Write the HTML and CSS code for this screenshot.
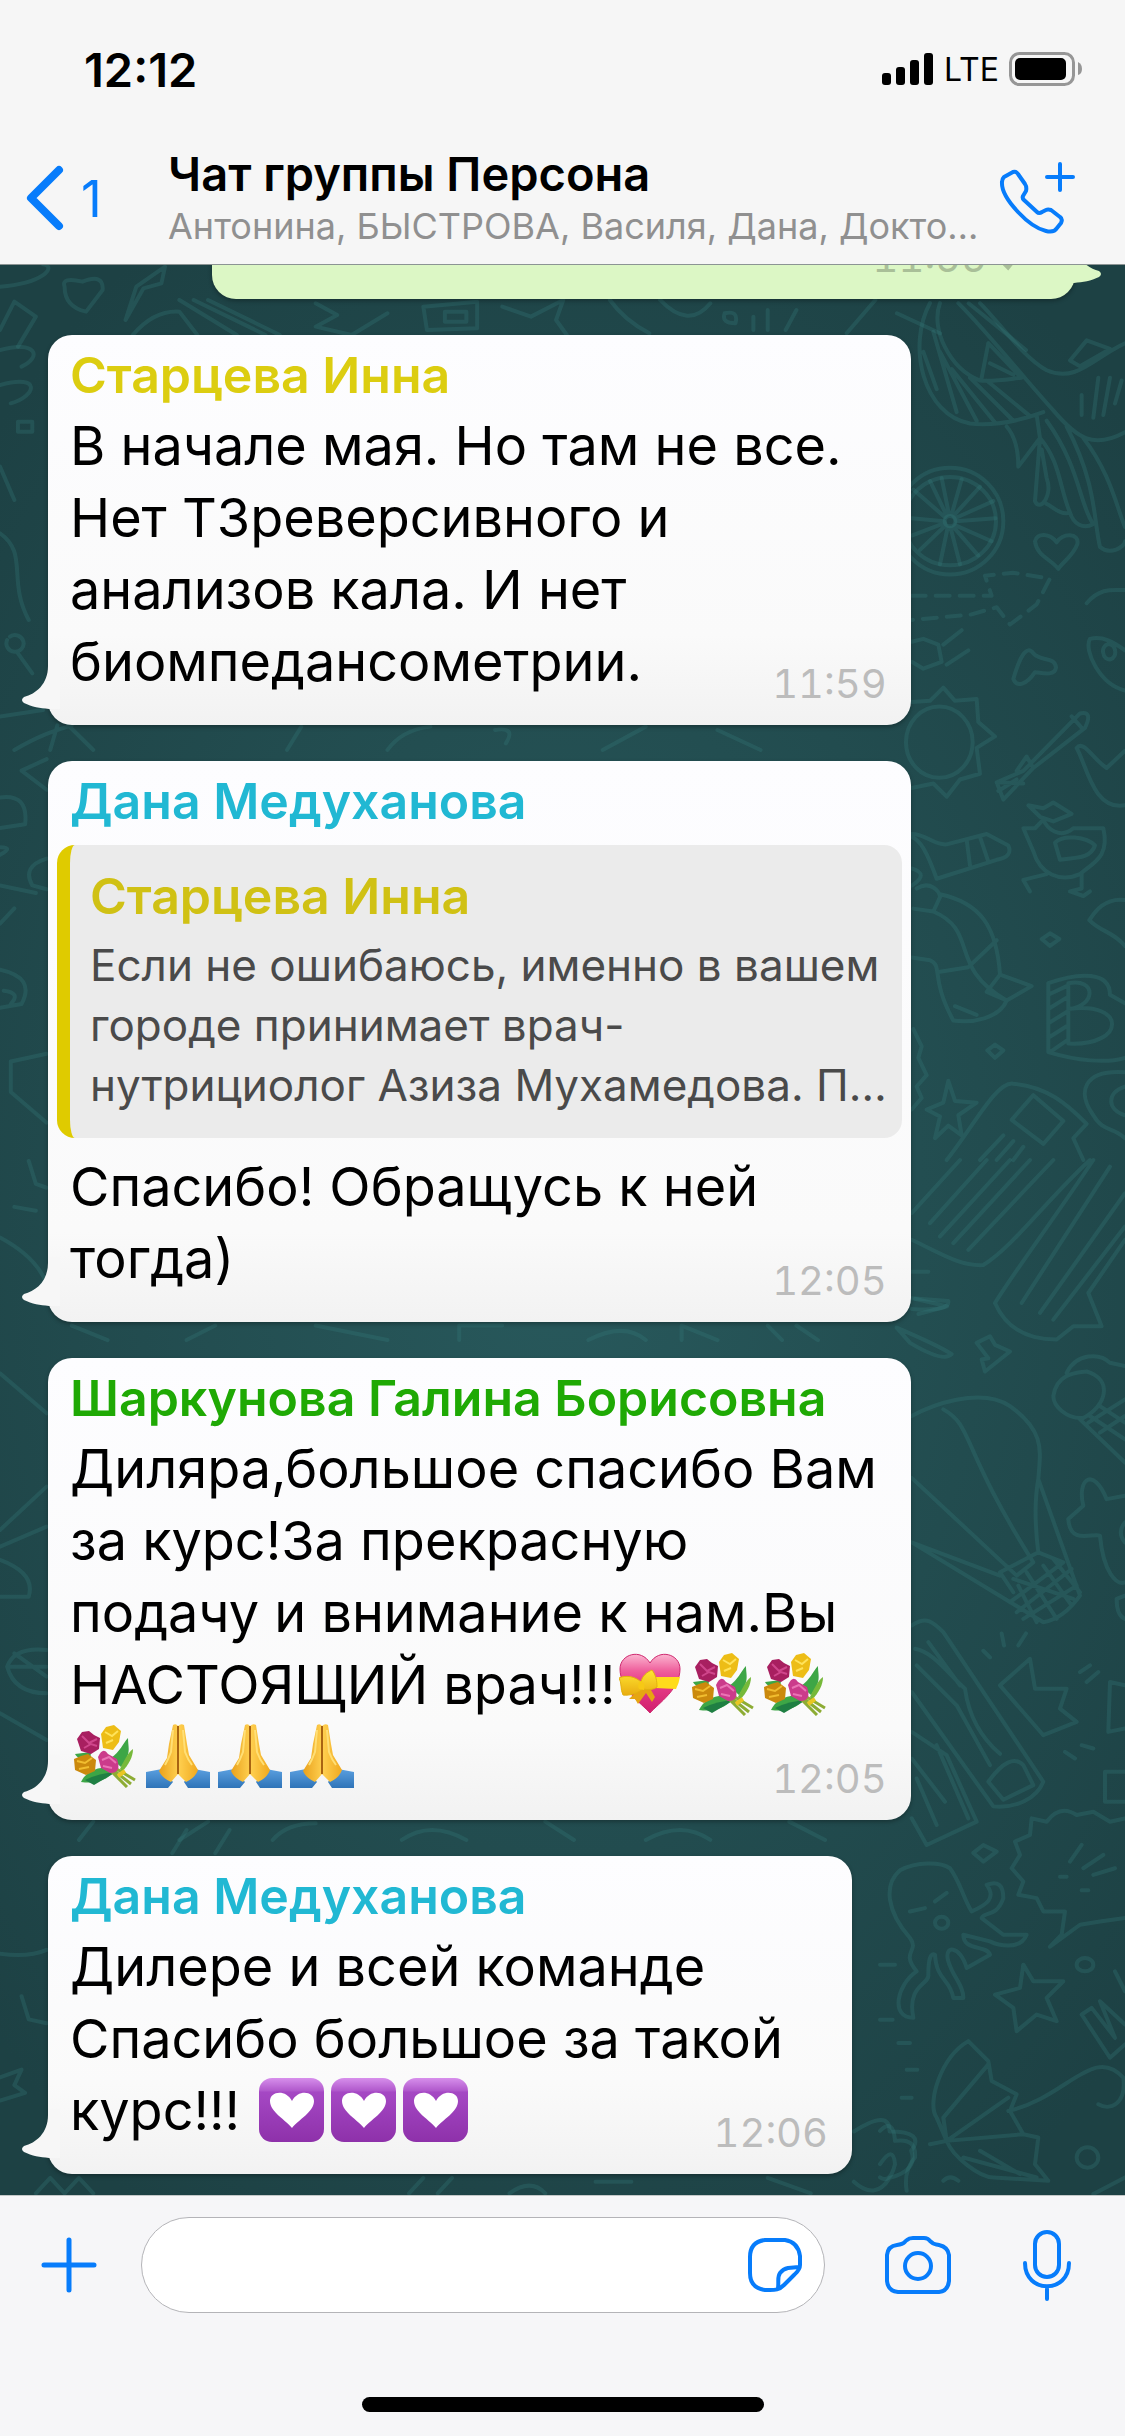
FILE: index.html
```html
<!DOCTYPE html>
<html lang="ru">
<head>
<meta charset="utf-8">
<meta name="viewport" content="width=device-width, initial-scale=1">
<title>Чат группы Персона</title>
<link rel="stylesheet" href="styles.css">
</head>
<body>
<svg class="defs" width="0" height="0" aria-hidden="true">
  <defs>
    <linearGradient id="heartFill" x1="0" y1="0" x2="0" y2="1"><stop offset="0" stop-color="#fbb5d0"/><stop offset=".28" stop-color="#ef5f9c"/><stop offset=".45" stop-color="#e8418b"/><stop offset="1" stop-color="#d11f6d"/></linearGradient>
    <linearGradient id="bow" x1="0" y1="0" x2="0" y2="1"><stop offset="0" stop-color="#ffe733"/><stop offset="1" stop-color="#e9ac10"/></linearGradient>
    <linearGradient id="skin" x1="0" y1="0" x2="1" y2="0"><stop offset="0" stop-color="#e9a11c"/><stop offset=".5" stop-color="#ffd050"/><stop offset="1" stop-color="#f0a91f"/></linearGradient>
    <linearGradient id="sleeve" x1="0" y1="0" x2="0" y2="1"><stop offset="0" stop-color="#5a9fdf"/><stop offset="1" stop-color="#2f74b8"/></linearGradient>
    <linearGradient id="violet" x1="0" y1="0" x2="0" y2="1"><stop offset="0" stop-color="#d78fec"/><stop offset=".2" stop-color="#b058cc"/><stop offset=".22" stop-color="#a548c4"/><stop offset="1" stop-color="#8e31aa"/></linearGradient>
    <symbol id="gift-heart" viewBox="0 0 72 64">
      <path d="M31 61C22 51 1 37 1 17C1 2 22-4 31 11C40-4 61 2 61 17C61 37 40 51 31 61Z" fill="url(#heartFill)" stroke="#cf2a70"/>
      <path d="M35 25L61 25Q60 31 57 37L36 36Z" fill="#ffdc1c"/>
      <path d="M20 37L10 47L16 47L19 52L27 41L33 50L36 45L32 38L26 34Z" fill="#e6a512"/>
      <path d="M22 30C16 24 6 23 0 26C3 31 1 37 4 43C11 44 19 41 24 37C29 38 34 38 38 35C38 29 37 23 33 18C28 20 23 24 22 30Z" fill="url(#bow)" stroke="#e2b10f"/>
      <path d="M21 29Q27 29 25 38L20 37Q18 32 21 29Z" fill="#f6c915"/>
    </symbol>
    <symbol id="bouquet" viewBox="0 0 72 64">
      <path d="M38 34C47 28 50 19 55 14C55 24 59 29 48 43ZM40 45C27 41 13 47 8 58C22 60 33 57 42 47ZM17 39C10 37 4 34 2 30L18 28Z" fill="#3da646"/>
      <path d="M47 45C52 34 56 28 60 25C60 33 56 40 49 48Z" fill="#76b93a"/>
      <path d="M12 56Q26 49 43 48L21 61Z" fill="#1f7f43"/>
      <path d="M39 45L58 60M42 44L62 56M37 46L54 63" stroke="#8dac34" stroke-width="3" fill="none"/>
      <path d="M45 52L52 47" stroke="#e9c724" stroke-width="4"/>
      <path d="M4 15L9 8L16 7L21 11L27 14L26 25L18 30L8 27Z" fill="#a81f60"/>
      <path d="M9 12L16 19L24 15M11 24L18 20L24 22" stroke="#d0468c" stroke-width="2" fill="none"/>
      <path d="M28 10L33 3L41 1L48 7L46 18L40 26L30 24Z" fill="#edbd16"/>
      <path d="M32 8L39 12L45 7M33 19L40 16" stroke="#ffe35a" stroke-width="2" fill="none"/>
      <path d="M1 35L8 32L15 30L23 36L22 47L13 51L2 46Z" fill="#cb890d"/>
      <path d="M4 37L12 39L19 34M6 45L16 43" stroke="#f1bd2f" stroke-width="2" fill="none"/>
      <path d="M25 33Q30 22 35 30L44 35Q49 49 37 49L28 44Z" fill="#cb3b8b"/>
      <path d="M29 36L36 33L43 39M30 42L39 44" stroke="#ea74b5" stroke-width="2" fill="none"/>
    </symbol>
    <symbol id="hands" viewBox="0 0 72 64">
      <path d="M1 48L17 45L28 58L23 64H1ZM65 48L49 45L39 58L43 64H65Z" fill="url(#sleeve)"/>
      <path d="M28 1Q31-1 33 2Q36-1 39 1L42 20L44 31L53 46Q50 54 41 58L33 50L26 58Q17 54 14 47L22 34L24 20Z" fill="url(#skin)"/>
      <path d="M33 2V50" stroke="#a96412" stroke-width="2"/>
      <path d="M28 6L26 28Q23 36 20 41M38 6L40 28Q43 36 47 41" stroke="#ffdf75" stroke-width="2" fill="none"/>
    </symbol>
    <symbol id="violet-heart" viewBox="0 0 72 64">
      <rect x="1" y="0" width="65" height="64" rx="13" fill="url(#violet)"/>
      <path d="M34 50C28 42 12 34 12 23C12 13 28 11 34 23C40 11 56 13 56 23C56 34 40 42 34 50Z" fill="#fff"/>
    </symbol>
    <symbol id="tail" viewBox="0 0 40 56">
      <path d="M28 0V6C28 24 16 34 4 37Q0 40 4 43C12 47 20 48 29 49H40V0Z"/>
    </symbol>
  </defs>
</svg>
<div class="app">
  <header class="header">
    <div class="status">
      <time class="clock">12:12</time>
      <div class="status-right">
        <svg width="52" height="34" viewBox="0 0 52 34" aria-hidden="true"><rect y="21" width="9" height="12" rx="3"/><rect x="14" y="15" width="9" height="18" rx="3"/><rect x="28" y="8" width="9" height="25" rx="3"/><rect x="42" y="1" width="9" height="32" rx="3"/></svg>
        <span class="network">LTE</span>
        <svg width="74" height="34" viewBox="0 0 74 34" aria-hidden="true"><rect x="1.500" y="1.500" width="63" height="31" rx="9" fill="none" stroke="#969696" stroke-width="3"/><rect x="6" y="6" width="51" height="22" rx="5"/><path d="M69 10Q73 12 73 17T69 23Z" fill="#969696"/></svg>
      </div>
    </div>
    <nav class="nav">
      <a class="back" href="#" aria-label="Назад, 1 чат">
        <svg width="40" height="68" viewBox="0 0 40 68" aria-hidden="true"><path d="M34 6L6 34L34 62" stroke-width="8"/></svg>
        <span>1</span>
      </a>
      <div class="heading">
        <h1>Чат группы Персона</h1>
        <p>Антонина, БЫСТРОВА, Василя, Дана, Докто…</p>
      </div>
      <button class="icon call" aria-label="Добавить звонок">
        <svg width="74" height="72" viewBox="0 0 74 72" aria-hidden="true"><path d="M60 2V28M47 15H73M4 15L13 10Q16 9 18 12L25 22Q27 25 26 29L23 34Q22 36 24 38L37 50Q39 52 42 50L46 48Q48 47 51 48L60 55Q63 57 61 61L57 66Q54 71 46 69Q33 66 18 50Q1 32 2 20Q2 17 4 15Z" stroke-width="4"/></svg>
      </button>
    </nav>
  </header>

  <main class="chat">
    <svg class="doodles" viewBox="0 265 1125 1930" preserveAspectRatio="xMidYMid slice" aria-hidden="true">
      <g transform="translate(880 260) scale(.3333 .574)">
        <path d="M180 75C150 120 210 190 300 210C340 212 380 208 425 205M150 75C80 150 130 270 270 285C350 290 420 280 490 265M235 75C330 130 430 205 520 262C590 310 640 330 735 300M300 75C360 110 430 170 500 192C590 215 640 170 735 145M325 145L305 205M325 145L420 203M330 180L400 200M130 160L170 225M160 125L230 265M180 160L290 280M215 190L345 283M270 205L400 280M320 210L450 272M380 290C410 310 415 335 415 360L480 310L470 270M480 310L465 420C480 440 520 410 500 380L485 330M480 310C540 350 540 400 570 440C540 445 520 430 500 425M500 280C600 360 600 430 640 460C610 470 580 460 570 440M560 290C650 390 640 450 660 500C690 515 735 500 735 490M610 310C690 370 710 430 735 465M570 175L620 140L690 155L600 185ZM605 235V270M655 205L640 275M690 205L670 270M725 210L705 250"/>
        <ellipse cx="210" cy="455" rx="160" ry="93"/><ellipse cx="210" cy="455" rx="138" ry="77"/><ellipse cx="210" cy="455" rx="16" ry="9"/>
        <path d="M195 448L100 400M200 445L150 385M207 443L185 380M215 443L245 382M220 446L300 395M225 450L340 420M228 455L347 450M225 462L335 490M220 465L295 515M212 467L240 530M203 466L180 530M197 462L120 505M192 455L95 450M195 458L95 480"/>
        <path d="M465 490C470 475 510 475 530 492C545 475 600 475 592 495C580 515 550 525 535 538C510 520 470 515 465 490ZM400 730C420 690 440 670 460 685C480 700 525 690 528 710C525 725 490 720 465 718C440 740 410 745 400 730Z"/>
        <path stroke-dasharray="14 10" d="M95 585H335L315 550L400 545L510 555L470 600L390 635L350 605L270 618L95 627"/>
        <path d="M95 665L130 660L175 670L185 700L130 712L95 700M190 670L245 645M200 705L265 680M620 598C660 570 700 575 735 575M735 750C660 740 610 680 630 660C670 655 700 665 735 680M670 685A18 12 0 1 0 705 680A18 12 0 1 0 670 685"/>
        <path d="M95 770L150 768L190 745L225 768L290 765L295 805L345 830L290 850L300 895L240 905L200 935L160 912L95 920"/><ellipse cx="178" cy="840" rx="100" ry="62"/>
        <path d="M350 910L430 890L600 790Q640 785 615 815L460 885L370 940ZM410 890L440 865L460 885M575 795L605 815M350 910L430 912M355 925L410 905M590 850C610 835 640 870 680 885L735 855M590 850C620 880 640 960 735 950"/>
        <path d="M95 1000C140 1000 160 1020 200 1018L320 1000L385 1020Q400 1040 350 1045L170 1078C140 1030 120 1010 95 1005M260 1010L270 1055M300 1005L325 1048M95 1060Q150 1070 95 1090M110 1095C150 1080 180 1100 180 1110L160 1135L100 1130M180 1105C300 1120 350 1160 360 1245L455 1265L380 1290L320 1275L360 1245M160 1135C300 1170 200 1230 380 1290C360 1320 280 1330 220 1325C150 1250 190 1230 150 1220L95 1215M180 1240L265 1232L350 1185M225 1300L290 1315"/>
        <path d="M430 990L465 990L490 975C500 990 540 1010 580 990L670 990C690 1040 640 1050 600 1070C540 1085 480 1070 460 1030ZM525 1015C550 1000 620 1005 645 1020C630 1045 580 1040 540 1045ZM445 950L490 955L520 945L575 965L520 978L480 970ZM500 1070L430 1080L450 1100M605 1070V1095L570 1100L610 1108L630 1100"/>
        <path d="M485 1183L510 1173L538 1183L510 1195ZM322 1377L345 1367L370 1377L345 1390ZM735 1115C670 1110 640 1140 628 1150C660 1170 700 1170 735 1195M505 1260C600 1240 690 1240 690 1280L735 1295M505 1260V1380C590 1395 680 1400 735 1390M565 1260C650 1250 650 1300 565 1305ZM565 1305C740 1290 740 1370 565 1365ZM505 1280L560 1265M505 1305L560 1285M505 1330L560 1310M505 1355L560 1335M510 1380L560 1360"/>
        <path d="M205 1430L225 1465L290 1468L235 1490L245 1525L205 1508L165 1530L180 1492L140 1480L190 1468ZM100 1340L125 1370L115 1390L140 1420L110 1440L125 1460L95 1480M735 1415C610 1410 590 1450 640 1490C670 1520 700 1510 735 1530M735 1440C680 1450 680 1480 735 1490M200 1568C280 1510 350 1430 400 1435C500 1440 560 1470 620 1505L580 1530L610 1568M395 1498L460 1455L550 1500L490 1540ZM300 1568L370 1525M350 1568L400 1535M400 1568L430 1545"/>
      </g>
      <g transform="translate(880 1160) scale(.3333 .665)">
        <path d="M95 80L240 0M150 95L320 0M180 115L390 0M220 125L450 0M265 135L520 0M95 120C180 140 240 160 310 158C400 130 500 60 630 0M345 215C400 170 520 90 640 0M425 215L690 10M480 230L735 50M520 240L735 100M345 215C380 255 450 270 530 270L580 250L665 250L625 200L735 120M95 168H145M95 208L205 212Q210 228 95 224M50 252Q180 280 215 292Q190 305 90 275ZM290 275L330 265L345 278L390 288L315 318L305 300L325 298Z"/>
        <path d="M95 385C150 370 300 340 390 370C500 410 480 440 475 480L600 655Q550 690 490 695L95 575M190 375C280 400 240 430 460 605L410 625L95 478M95 575L360 625M475 480C460 520 470 570 475 590L550 605M390 665L550 605M415 640L470 695M440 620L530 690M490 610L575 670M520 600L600 650M400 630L580 660M410 680L575 615M430 690L590 640M475 590L360 620L400 650"/>
        <path d="M520 355C530 320 590 320 620 318C700 330 680 370 610 388C560 390 520 370 520 355ZM560 320C590 290 660 290 690 305L735 310M600 390L735 455M630 385L735 420M660 370L735 395M625 395L735 360M660 410L735 385M565 540L610 520C590 480 640 460 680 510L735 505M565 540C570 580 640 560 660 565C670 620 710 640 735 635M735 545Q710 560 735 575M710 660L735 655M710 660Q710 685 735 690"/>
        <path d="M95 700C140 685 160 695 190 710L490 935C470 960 410 975 340 972L95 800M105 735C160 740 200 770 255 795C270 850 330 880 360 893M110 760L230 820L330 910M145 725L240 790M95 860L200 895L290 995L140 1030L95 990M95 900L195 965M110 930L170 1000M170 880L265 990M325 935Q390 890 430 910L460 940L370 962ZM360 790L450 750L465 795L560 795L540 825L590 845L490 865ZM310 738L330 748M365 712L372 730M415 730L438 712M600 770L630 760M620 785L655 770M555 890L585 900M605 880L640 885M735 790L690 785L685 860L735 855M735 920H675V965H735"/>
        <path d="M395 1065L420 1045L405 1025L450 1015L455 990L500 995C530 975 560 975 590 985L640 980L690 995L735 990M395 1065L430 1085L415 1105L470 1110L490 1130L555 1130L545 1165L510 1183L600 1150L660 1145L735 1140M570 1055L605 1030M610 1065L670 1045M640 1075L705 1065M540 1078H560M605 1098H625M280 1042L310 1030L350 1040L310 1055Z"/>
        <path d="M90 1170C20 1130 10 1090 60 1068C110 1055 180 1055 210 1065C240 1085 250 1110 275 1130C320 1120 350 1110 320 1090Q370 1080 370 1110C350 1140 310 1130 305 1140L370 1165L440 1165C420 1190 350 1180 330 1175L250 1165C250 1190 320 1180 330 1195L260 1215C240 1180 190 1180 205 1205C220 1230 250 1240 250 1260L220 1260C210 1230 170 1235 165 1195Q145 1190 145 1225C150 1240 80 1240 100 1290C30 1290 50 1240 110 1220C60 1190 120 1190 90 1170ZM90 1130L135 1125M165 1115L200 1102M165 1147A20 9 0 1 0 205 1147A20 9 0 1 0 165 1147"/>
        <path d="M430 1210L460 1235L550 1235L500 1260L530 1295L470 1285L410 1310L400 1275L345 1255L420 1245ZM590 1210A25 10 0 1 0 640 1210A25 10 0 1 0 590 1210ZM605 1285L690 1350L735 1330M605 1285L635 1275L705 1320L660 1265L735 1300M705 1220L735 1250M55 1328H90M80 1368H112M65 1410H95M0 1210H45M0 1293H38M190 1535Q210 1525 235 1535"/>
        <path d="M265 1325C180 1350 140 1420 170 1440L200 1475C220 1500 300 1530 340 1530L505 1535L465 1510L475 1470L430 1465L390 1430L410 1405L335 1385L325 1355ZM150 1480L200 1475L190 1440L325 1360M200 1475L385 1410M200 1475L430 1465M250 1500L470 1530M300 1490L420 1525M385 1430C560 1410 640 1330 730 1380C740 1420 690 1430 655 1420M590 1500A32 15 0 1 0 655 1500A32 15 0 1 0 590 1500M0 1460Q40 1440 45 1475Q110 1470 105 1500Q70 1520 80 1550M0 1510Q40 1480 45 1510Q30 1540 0 1530M735 1530L640 1555"/>
      </g>
      <g transform="scale(.7175 .3333)">
        <path d="M0 860C60 850 80 800 60 793M90 860Q85 830 115 845Q145 820 143 870L120 935Q90 920 90 860ZM175 960L190 860L230 800L225 850L200 865L175 960M0 990L20 905L50 950L25 1040M185 1005Q215 930 250 935L275 1005M250 900L330 1005M270 900L370 1005M290 900L390 1005M440 910L470 945L440 980L490 1005L540 940M590 920L665 905V985L595 990ZM620 935H650V965H620ZM700 920L740 950L785 900L775 960L790 1005M850 900Q870 960 905 1000M920 900Q960 990 990 910M1010 940Q1030 930 1025 970Q1005 970 1010 940M1050 990V950M1070 990V930M1095 990L1110 930M1180 1000L1220 900M1250 940L1310 1000M1350 910L1430 1050"/>
      </g>
      <g transform="translate(0 320) scale(.7175 .3333)">
        <path d="M0 90C50 60 60 110 30 140M0 195C60 160 50 230 15 250M25 305H45V335H25ZM0 440L20 540M0 640C40 700 10 780 40 900M10 960A12 25 0 1 0 14 950M25 1000L45 1060M0 1190L60 1170M20 1290C60 1240 80 1230 100 1216M70 1290L80 1216M130 1290L95 1216M400 1290L420 1220M540 1290Q560 1230 600 1220M690 1230Q720 1220 705 1270M840 1290L900 1220M1000 1230L1060 1290"/>
      </g>
      <g transform="translate(0 740) scale(.7175 .3827)">
        <path d="M30 80L65 50M30 80L65 130M0 150Q40 140 35 220L0 230M0 280Q20 280 0 300M65 310Q30 330 45 380L65 390M0 380L50 400M0 480L20 440M0 600Q50 620 30 690L0 700M5 655Q30 660 15 690M15 840L65 820M15 840V920L65 1000M40 1100L50 1160L65 1170M20 1220L50 1230M0 1300Q50 1350 65 1420M100 1530L150 1568M260 1568L300 1530M440 1530L540 1568M640 1568V1530H700M820 1568Q870 1520 900 1568M950 1568V1530L1000 1568M1070 1530L1090 1568M1110 1530L1140 1568M1275 1460L1320 1480L1280 1500"/>
      </g>
      <g transform="translate(0 1340) scale(.7175 .3333)">
        <path d="M0 100L65 220M0 570L65 440M0 620L65 560M0 660Q50 700 40 770H0M10 980Q20 920 65 930M10 980Q20 1060 65 1060M10 980H65M20 940L65 1010M0 1120L65 1200M110 1500L130 1445M250 1500L290 1445M380 1500Q400 1450 440 1450M560 1500Q600 1440 650 1500M760 1445L800 1500M900 1500Q950 1440 990 1500M1100 1445L1150 1500"/>
      </g>
      <g transform="translate(0 1830) scale(.7175 .3865)">
        <path d="M0 320Q40 330 65 310M0 640L30 620L20 660L35 680L0 700M30 430L40 490L65 500M50 940L70 900L90 940L110 900L130 940M240 60L260 0M300 60L320 0M570 940L590 900M610 940L630 900M710 940Q740 900 760 940M830 910H880M1070 900L1130 940M1190 780Q1240 720 1240 780Q1290 780 1270 830Q1280 880 1240 900Q1220 960 1190 910"/>
      </g>
    </svg>

    <section class="messages" aria-label="Сообщения">
      <article class="bubble mine">
        <svg class="tail" width="40" height="56" aria-hidden="true"><use href="#tail"/></svg>
        <div class="stamp"><time>11:55</time><svg width="30" height="24" viewBox="0 0 30 24" aria-hidden="true"><path d="M4 11L13 20L27 3" stroke-width="6"/></svg></div>
      </article>

      <article class="bubble">
        <svg class="tail" width="40" height="56" aria-hidden="true"><use href="#tail"/></svg>
        <h2 class="author yellow">Старцева Инна</h2>
        <p class="text">В начале мая. Но там не все.<br>Нет ТЗреверсивного и<br>анализов кала. И нет<br>биомпедансометрии.</p>
        <div class="stamp"><time>11:59</time></div>
      </article>

      <article class="bubble">
        <svg class="tail" width="40" height="56" aria-hidden="true"><use href="#tail"/></svg>
        <h2 class="author cyan">Дана Медуханова</h2>
        <blockquote class="quote">
          <h3 class="author">Старцева Инна</h3>
          <p>Если не ошибаюсь, именно в вашем<br>городе принимает врач-<br>нутрициолог Азиза Мухамедова. П…</p>
        </blockquote>
        <p class="text">Спасибо! Обращусь к ней<br>тогда)</p>
        <div class="stamp"><time>12:05</time></div>
      </article>

      <article class="bubble">
        <svg class="tail" width="40" height="56" aria-hidden="true"><use href="#tail"/></svg>
        <h2 class="author green">Шаркунова Галина Борисовна</h2>
        <p class="text">Диляра,большое спасибо Вам<br>за курс!За прекрасную<br>подачу и внимание к нам.Вы<br>НАСТОЯЩИЙ врач!!!<svg class="emoji" role="img" aria-label="💝"><use href="#gift-heart"/></svg><svg class="emoji" role="img" aria-label="💐"><use href="#bouquet"/></svg><svg class="emoji" role="img" aria-label="💐"><use href="#bouquet"/></svg><br><svg class="emoji" role="img" aria-label="💐"><use href="#bouquet"/></svg><svg class="emoji" role="img" aria-label="🙏"><use href="#hands"/></svg><svg class="emoji" role="img" aria-label="🙏"><use href="#hands"/></svg><svg class="emoji" role="img" aria-label="🙏"><use href="#hands"/></svg></p>
        <div class="stamp"><time>12:05</time></div>
      </article>

      <article class="bubble narrow">
        <svg class="tail" width="40" height="56" aria-hidden="true"><use href="#tail"/></svg>
        <h2 class="author cyan">Дана Медуханова</h2>
        <p class="text">Дилере и всей команде<br>Спасибо большое за такой<br>курс!!! <svg class="emoji" role="img" aria-label="💟"><use href="#violet-heart"/></svg><svg class="emoji" role="img" aria-label="💟"><use href="#violet-heart"/></svg><svg class="emoji" role="img" aria-label="💟"><use href="#violet-heart"/></svg></p>
        <div class="stamp"><time>12:06</time></div>
      </article>
    </section>
  </main>

  <footer class="footer">
    <form class="composer">
      <button type="button" class="icon" aria-label="Прикрепить">
        <svg width="60" height="60" viewBox="0 0 60 60" aria-hidden="true"><path d="M30 5V55M5 30H55" stroke-width="5"/></svg>
      </button>
      <div class="field">
        <input type="text" aria-label="Сообщение">
        <button type="button" class="icon" aria-label="Стикеры">
          <svg width="54" height="54" viewBox="0 0 54 54" aria-hidden="true"><path d="M22 52H17Q2 50 2 35V19Q2 4 17 2H37Q50 4 52 18V27C52 32 48 35 46 37L36 47C31 52 27 52 22 52ZM30 50C31 44 29 39 32 35Q35 31 40 30L51 29" stroke-width="4"/></svg>
        </button>
      </div>
      <button type="button" class="icon camera" aria-label="Камера">
        <svg width="66" height="58" viewBox="0 0 66 58" aria-hidden="true"><path d="M2 45V19Q3 10 12 9C20 8 18 7 22 4Q24 2 28 2H39Q43 2 45 5C49 9 49 8 54 9Q63 11 64 19V45Q63 55 54 56H13Q3 55 2 45Z" stroke-width="4"/><circle cx="33" cy="30" r="13" stroke-width="4"/></svg>
      </button>
      <button type="button" class="icon mic" aria-label="Голосовое сообщение">
        <svg width="50" height="72" viewBox="0 0 50 72" aria-hidden="true"><rect x="13" y="3" width="24" height="45" rx="12" stroke-width="4"/><path d="M3 34C3 65 47 65 47 34M25 58V70" stroke-width="4"/></svg>
      </button>
    </form>
    <div class="home-bar"></div>
  </footer>
</div>
</body>
</html>
```
FILE: styles.css
```css
* { box-sizing: border-box; }
body { margin: 0; font-family: Inter, "Liberation Sans", sans-serif; color: #000; }
h1, h2, h3, p, blockquote { margin: 0; font-weight: 400; }
button { padding: 0; border: 0; background: none; }
.defs { position: absolute; }
svg { display: block; flex: none; overflow: visible; }

.app { display: flex; flex-direction: column; height: 100vh; }

.header { background: #f6f6f6; border-bottom: 1px solid #8c9494; }
.status { display: flex; justify-content: space-between; align-items: center; height: 132px; padding: 6px 42px 0 84px; }
.clock { font-size: 47px; font-weight: 600; }
.status-right { display: flex; align-items: center; gap: 10px; }
.network { font-size: 32px; }

.nav { display: flex; align-items: center; height: 132px; padding: 0 51px 0 25px; }
.back { display: flex; align-items: center; gap: 16px; width: 143px; color: #077cfb; font-size: 51px; text-decoration: none; }
.back path, .icon path, .icon rect, .icon circle { fill: none; stroke: #077cfb; stroke-linecap: round; stroke-linejoin: round; }
.heading { flex: 1; min-width: 0; padding-bottom: 4px; white-space: nowrap; }
.heading h1 { font-size: 47px; font-weight: 600; line-height: 60px; }
.heading p { color: #909090; font-size: 36px; line-height: 45px; }

.chat {
  position: relative;
  flex: 1;
  min-height: 0;
  display: flex;
  flex-direction: column;
  justify-content: flex-end;
  overflow: hidden;
  background: radial-gradient(ellipse 70% 60% at 50% 50%, #28595c, #1d4144);
}
.doodles { position: absolute; inset: 0; width: 100%; height: 100%; fill: none; stroke: #35797a; stroke-opacity: .3; stroke-width: 4; }
.doodles path, .doodles ellipse { vector-effect: non-scaling-stroke; stroke-linecap: round; stroke-linejoin: round; }

.messages { position: relative; display: flex; flex-direction: column; gap: 36px; padding: 0 50px 21px 48px; }
.bubble {
  position: relative;
  width: 84%;
  padding: 5px 22px 27px;
  border-radius: 24px;
  background: linear-gradient(#fdfdff, #fafafa calc(100% - 90px), #f2f2f2);
  box-shadow: 0 2px 4px rgba(0, 0, 0, .3);
}
.narrow { width: 804px; max-width: 100%; }
.mine { align-self: flex-end; height: 108px; background: #dcf7c5; }
.tail { position: absolute; left: -28px; bottom: 9px; fill: #f7f7f7; }
.mine .tail { left: auto; right: -28px; fill: #dcf7c5; transform: scaleX(-1); }

.author { font-size: 50px; font-weight: 600; line-height: 70px; white-space: nowrap; }
.yellow { color: #dccd10; }
.cyan { color: #21b8d3; }
.green { color: #1fa904; }
.text { font-size: 54px; line-height: 72px; white-space: nowrap; }
.emoji { display: inline-block; width: 72px; height: 64px; margin: 0 -3px 0 3px; vertical-align: -12px; }

.quote { margin: 9px -13px 13px; padding: 16px 20px 23px; border-left: 13px solid #dfcb00; border-radius: 18px; background: #ebebeb; color: #4a4a4a; }
.quote .author { color: #d0c114; }
.quote p { margin-top: 4px; font-size: 44px; line-height: 60px; white-space: nowrap; }

.stamp { position: absolute; right: 24px; bottom: 16px; display: flex; align-items: center; gap: 8px; color: #bcbcbc; font-size: 40px; line-height: 50px; font-variant-numeric: tabular-nums; }
.mine .stamp { right: 50px; color: #a9bf98; }
.stamp path { fill: none; stroke: #a9bf98; }

.footer { display: flex; flex-direction: column; align-items: center; justify-content: space-between; height: 241px; padding: 21px 0 24px; border-top: 1px solid #c4c8c8; background: #f6f6f8; }
.composer { display: flex; align-items: center; width: 100%; padding: 0 53px 0 39px; }
.field { display: flex; flex: 1; align-items: center; min-width: 0; height: 96px; margin: 0 60px 0 42px; padding: 0 22px 0 30px; border: 1px solid #b4b4b8; border-radius: 48px; background: #fff; }
.field input { flex: 1; min-width: 0; border: 0; outline: 0; background: none; font: inherit; font-size: 48px; }
.camera { margin-right: 71px; }
.home-bar { width: 402px; height: 15px; border-radius: 8px; background: #000; }
```
